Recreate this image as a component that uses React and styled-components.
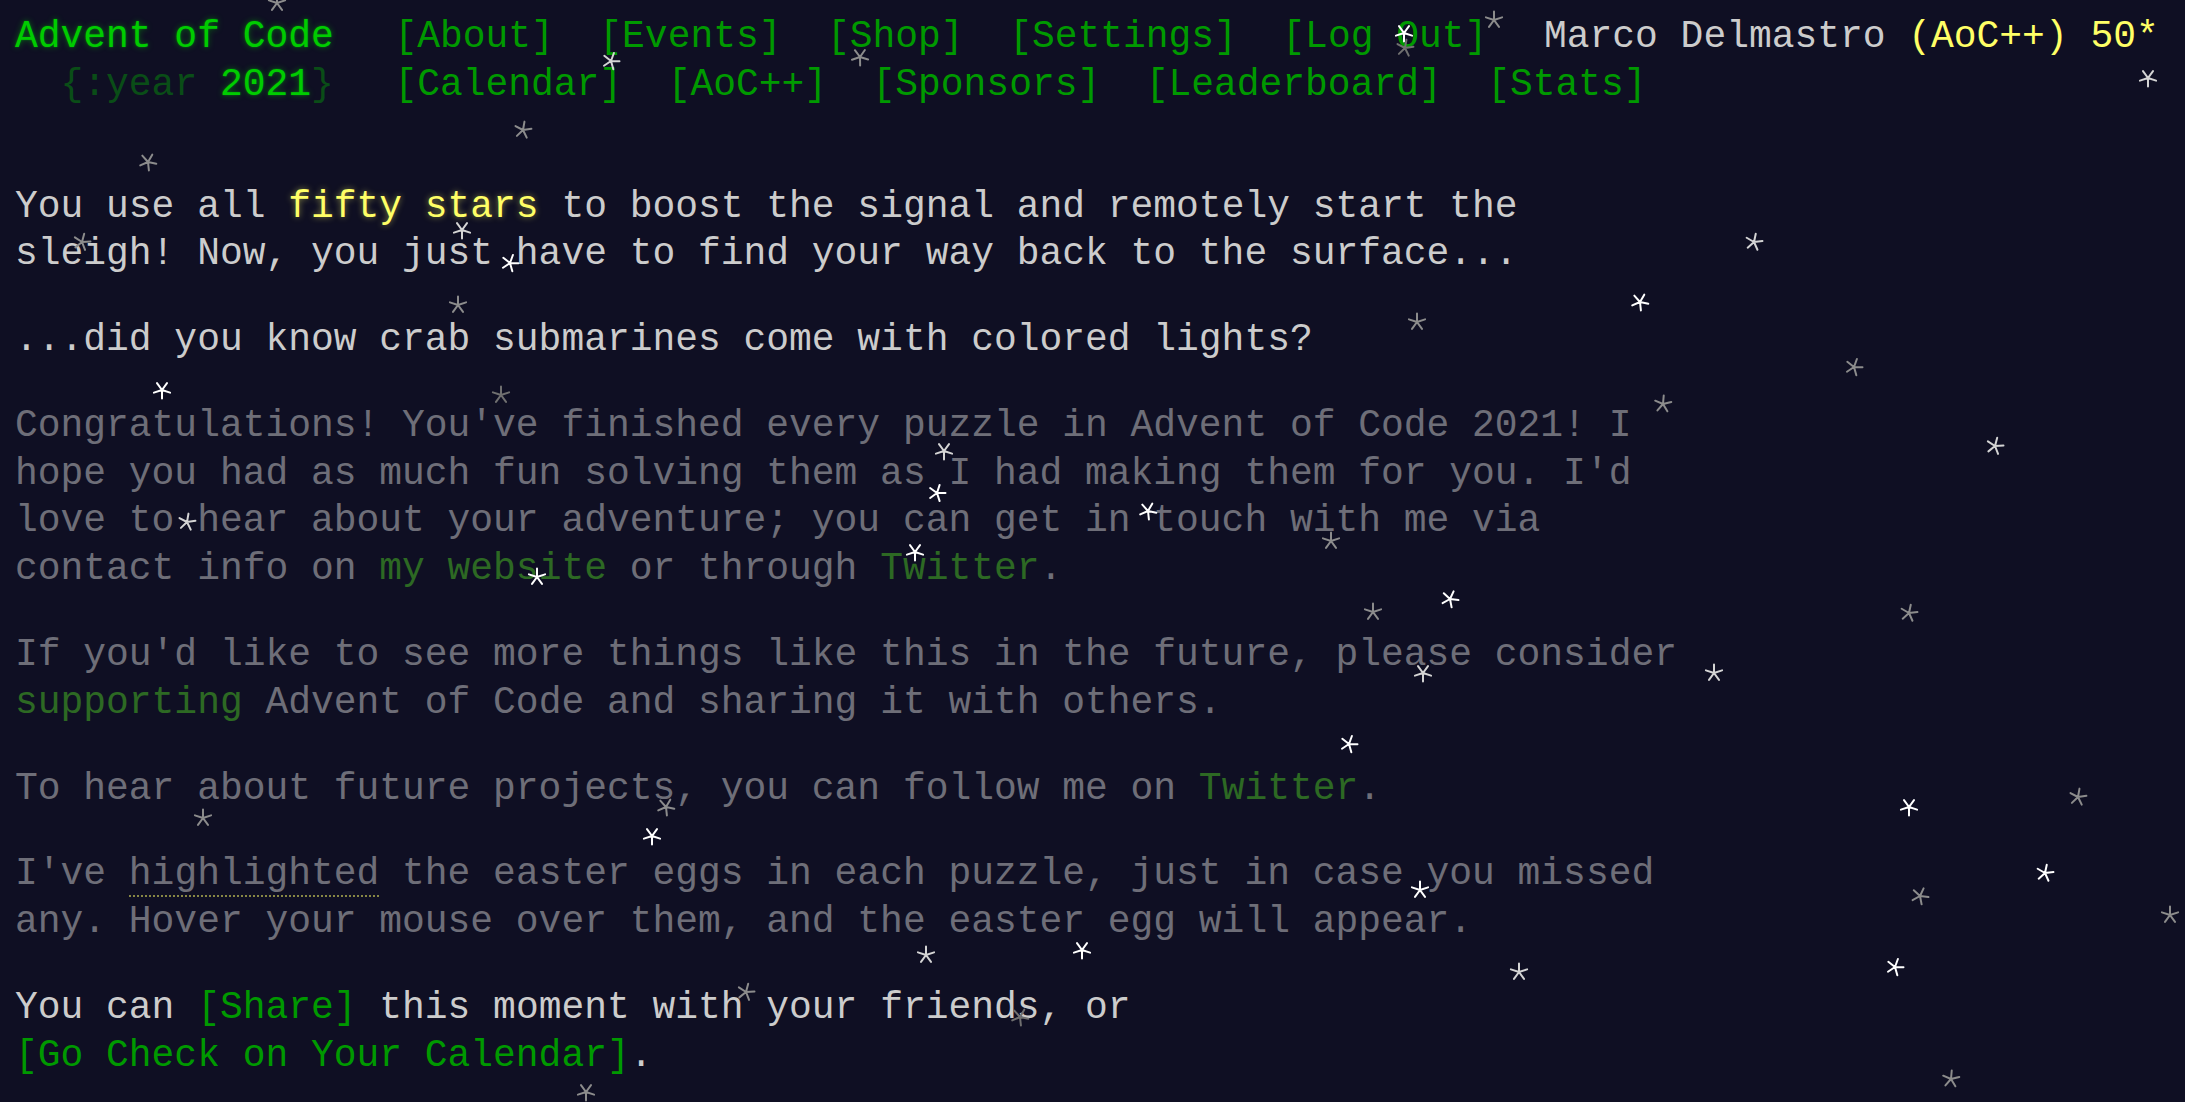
import React from "react";
import styled, { createGlobalStyle } from "styled-components";

const GlobalStyle = createGlobalStyle`
  html, body {
    margin: 0;
    padding: 0;
    background: #0f0f23;
  }
  body {
    color: #cccccc;
    font-family: "Liberation Mono", "DejaVu Sans Mono", monospace;
    font-size: 37.95px;
    line-height: 47.8px;
    overflow: hidden;
  }
`;

const Page = styled.div`
  position: relative;
  box-sizing: border-box;
  min-height: 1102px;
  padding: 13px 0 0 15px;
  overflow: hidden;
`;

const Header = styled.header`
  white-space: nowrap;
  margin-bottom: 74px;
`;

const HeaderRow = styled.div`
  display: flex;
  align-items: baseline;
`;

const Title = styled.h1`
  flex: 0 0 auto;
  width: 14ch;
  margin: 0;
  padding-right: 1em;
  font-size: inherit;
  font-weight: normal;
  color: #00cc00;
`;

const TitleLink = styled.a`
  color: #00cc00;
  text-decoration: none;
  text-shadow: 0 0 2px rgba(0, 204, 0, 0.45), 0 0 6px rgba(0, 204, 0, 0.45);
`;

const TitleWrap = styled.span`
  white-space: pre;
  opacity: 0.33;
`;

const NavList = styled.ul`
  display: flex;
  list-style: none;
  margin: 0;
  padding: 0;
`;

const NavItem = styled.li`
  padding: 0 0.6em;
`;

const NavLink = styled.a`
  color: #009900;
  text-decoration: none;
`;

const User = styled.div`
  padding-left: 34px;
  color: #cccccc;
`;

const Yellow = styled.span`
  color: #ffff66;
  text-shadow: ${(p) => (p.$glow ? "0 0 6px rgba(255, 255, 102, 0.5)" : "none")};
`;

const Article = styled.main`
  width: 73.5ch;
`;

const Para = styled.p`
  margin: 0 0 1em;
  opacity: ${(p) => (p.$quiet ? 0.5 : 1)};
`;

const Link = styled.a`
  color: ${(p) => (p.$soft ? "#4bc323" : "#009900")};
  text-decoration: none;
  white-space: ${(p) => (p.$nowrap ? "nowrap" : "normal")};
`;

const Egg = styled.span`
  border-bottom: 2px dotted #ffff66;
`;

const StarBox = styled.svg.attrs((p) => ({
  style: { left: p.$x - 10, top: p.$y - 10 },
}))`
  position: absolute;
  width: 20px;
  height: 20px;
  pointer-events: none;
  overflow: visible;
`;

const STAR_COLORS = { w: "#ffffff", l: "#d4d4d4", g: "#8c8c8c", d: "#707070" };

const STARS = [
  [277, 3, "g", 0], [611, 61, "l", 20], [860, 57, "g", 35], [1404, 33, "w", 36],
  [1405, 48, "d", 10], [1494, 20, "g", 0], [2148, 78, "l", 36], [523, 130, "g", 10],
  [148, 162, "g", 30], [82, 242, "g", 15], [462, 230, "l", 36], [510, 263, "w", 20],
  [458, 305, "g", 0], [1754, 242, "l", 12], [1640, 302, "w", 30], [1417, 322, "g", 0],
  [1854, 367, "g", 20], [1663, 404, "g", 5], [162, 390, "w", 36], [501, 395, "d", 0],
  [944, 451, "l", 36], [937, 493, "w", 18], [1148, 511, "w", 30], [187, 522, "l", 10],
  [1331, 541, "g", 0], [915, 552, "w", 36], [537, 577, "w", 0], [1995, 446, "l", 15],
  [1373, 612, "g", 0], [1450, 599, "w", 25], [1909, 613, "g", 12], [1423, 673, "l", 36],
  [1714, 673, "l", 0], [1349, 744, "w", 20], [2078, 797, "g", 10], [1909, 807, "w", 36],
  [666, 807, "g", 30], [203, 818, "g", 0], [652, 836, "w", 36], [2045, 873, "w", 12],
  [1420, 890, "w", 0], [1920, 896, "g", 25], [2170, 915, "g", 0], [926, 955, "l", 0],
  [1082, 950, "w", 36], [1519, 972, "l", 0], [1895, 967, "w", 20], [746, 992, "g", 15],
  [1020, 1017, "d", 30], [1951, 1079, "g", 5], [586, 1092, "g", 36],
];

function Star({ x, y, tone, rot }) {
  const arms = [0, 1, 2, 3, 4].map((i) => {
    const a = ((-90 + i * 72 + rot) * Math.PI) / 180;
    return `M10 10 L${(10 + 8.5 * Math.cos(a)).toFixed(2)} ${(10 + 8.5 * Math.sin(a)).toFixed(2)}`;
  });
  return (
    <StarBox $x={x} $y={y} viewBox="0 0 20 20">
      <path
        d={arms.join(" ")}
        stroke={STAR_COLORS[tone]}
        strokeWidth="2"
        strokeLinecap="round"
        fill="none"
      />
    </StarBox>
  );
}

const NAV1 = ["[About]", "[Events]", "[Shop]", "[Settings]", "[Log Out]"];
const NAV2 = ["[Calendar]", "[AoC++]", "[Sponsors]", "[Leaderboard]", "[Stats]"];

function Nav({ items }) {
  return (
    <NavList>
      {items.map((t) => (
        <NavItem key={t}>
          <NavLink href="#">{t}</NavLink>
        </NavItem>
      ))}
    </NavList>
  );
}

export default function App() {
  return (
    <>
      <GlobalStyle />
      <Page>
        <Header>
          <HeaderRow>
            <Title>
              <TitleLink href="#">Advent of Code</TitleLink>
            </Title>
            <Nav items={NAV1} />
            <User>
              Marco Delmastro <Yellow>(AoC++)</Yellow> <Yellow>50*</Yellow>
            </User>
          </HeaderRow>
          <HeaderRow>
            <Title>
              {"\u00a0\u00a0"}
              <TitleWrap>{"{:year "}</TitleWrap>
              <TitleLink href="#">2021</TitleLink>
              <TitleWrap>{"}"}</TitleWrap>
            </Title>
            <Nav items={NAV2} />
          </HeaderRow>
        </Header>
        <Article>
          <Para>
            You use all <Yellow $glow>fifty stars</Yellow> to boost the signal
            and remotely start the sleigh! Now, you just have to find your way
            back to the surface...
          </Para>
          <Para>...did you know crab submarines come with colored lights?</Para>
          <Para $quiet>
            Congratulations! You've finished every puzzle in Advent of Code
            2021! I hope you had as much fun solving them as I had making them
            for you. I'd love to hear about your adventure; you can get in touch
            with me via contact info on <Link href="#" $soft>my website</Link>{" "}
            or through <Link href="#" $soft>Twitter</Link>.
          </Para>
          <Para $quiet>
            If you'd like to see more things like this in the future, please
            consider <Link href="#" $soft>supporting</Link> Advent of Code and
            sharing it with others.
          </Para>
          <Para $quiet>
            To hear about future projects, you can follow me on{" "}
            <Link href="#" $soft>Twitter</Link>.
          </Para>
          <Para $quiet>
            I've <Egg>highlighted</Egg> the easter eggs in each puzzle, just in
            case you missed any. Hover your mouse over them, and the easter egg
            will appear.
          </Para>
          <Para>
            You can <Link href="#">[Share]</Link> this moment with your friends,
            or <Link href="#" $nowrap>[Go Check on Your Calendar]</Link>.
          </Para>
        </Article>
        {STARS.map(([x, y, tone, rot], i) => (
          <Star key={i} x={x} y={y} tone={tone} rot={rot} />
        ))}
      </Page>
    </>
  );
}
